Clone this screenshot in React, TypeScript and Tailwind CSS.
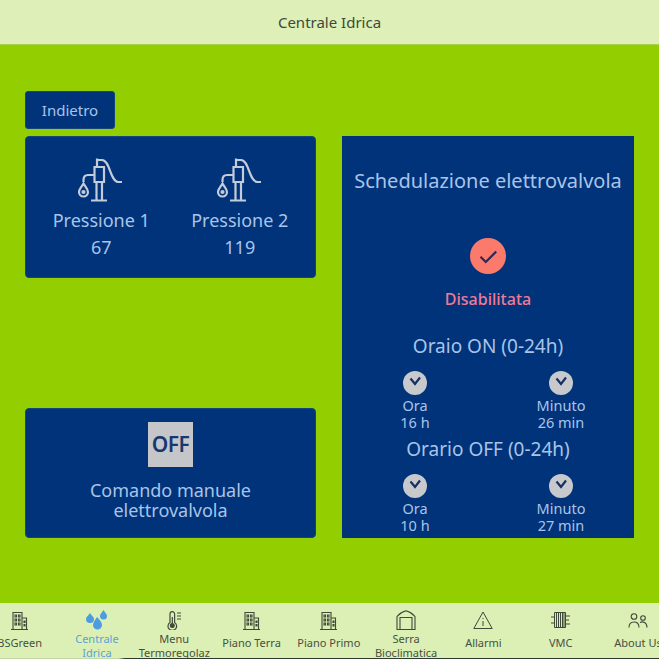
import React from "react";

const font = { fontFamily: '"Noto Sans", "Open Sans", sans-serif' };

const PumpIcon = () => (
  <svg width="46" height="46" viewBox="0 0 46 46" fill="none" stroke="#c3ccd8" strokeWidth="2.200">
    <path d="M16.500 10h9.500v15h-9.500z" />
    <path d="M18.500 25v18M24 25v18M13 43.500h16" />
    <path d="M19 10V1.500M19 3h5c8 0 8 21 16 22h4" />
    <path d="M16.500 18H10c-3 0-4.500 2-4.500 5v2" />
    <path d="M5.500 26.500C3.500 30 1 32 1 35a4.500 4.500 0 0 0 9 0c0-3-2.500-5-4.500-8.500z" />
    <circle cx="5.500" cy="35" r="1" fill="#c3ccd8" />
  </svg>
);

const CheckCircle = ({ size, bg, stroke, offset }: { size: number; bg: string; stroke: string; offset?: boolean }) => (
  <svg width={size} height={size} viewBox="0 0 24 24">
    <circle cx="12" cy="12" r="12" fill={bg} />
    <path d={offset ? "M7.500 7.500 12 13 17 6.500" : "M7 12.500 10.500 16 17.500 9"} fill="none" stroke={stroke} strokeWidth={offset ? 2.200 : 1.500} />
  </svg>
);

const TimeField = ({ label, value }: { label: string; value: string }) => (
  <div className="flex flex-col items-center">
    <CheckCircle size={24} bg="#c8c9cc" stroke="#17305f" offset />
    <div className="mt-[2px] text-[14.500px] leading-[17px]">{label}</div>
    <div className="text-[14.500px] leading-[17px]">{value}</div>
  </div>
);

const Building = () => (
  <svg width="17" height="19" viewBox="0 0 17 19" fill="none" stroke="#3f4a38" strokeWidth="1.100">
    <path d="M2 18V1.500h9V18M11 7h4.500v11M0 18.500h17" />
    <path d="M4 4h1.500v2H4zM7.500 4H9v2H7.500zM4 8h1.500v2H4zM7.500 8H9v2H7.500zM4 12h1.500v2H4zM7.500 12H9v2H7.500zM13 10h1v1.500h-1zM13 13.500h1V15h-1z" />
  </svg>
);

const Drops = () => (
  <svg width="21" height="20" viewBox="0 0 21 20" fill="#4d9be0">
    <path d="M4 3C2.500 5.500 0 7 0 9a4 4 0 0 0 8 0c0-2-2.500-3.500-4-6z" />
    <path d="M17.500 0c-1.500 2.500-3.500 4-3.500 6a3.500 3.500 0 0 0 7 0c0-2-2-3.500-3.500-6z" />
    <path d="M11 7C9.500 10 7 12 7 15a4.500 4.500 0 0 0 9 0c0-3-2.500-5-5-8z" />
  </svg>
);

const Thermometer = () => (
  <svg width="15" height="19" viewBox="0 0 15 19" fill="none" stroke="#3f4a38" strokeWidth="1.200">
    <path d="M3 11.500V3a2.300 2.300 0 0 1 4.600 0v8.500a4.300 4.300 0 1 1-4.600 0z" />
    <circle cx="5.300" cy="14.600" r="1.900" fill="#3f4a38" />
    <path d="M5.300 13V6M10 2h4M10 5h4M10 8h4" />
  </svg>
);

const Greenhouse = () => (
  <svg width="20" height="20" viewBox="0 0 20 20" fill="none" stroke="#3f4a38" strokeWidth="1.100">
    <path d="M1 19.500V6.500C3 4 6 2 10 .8c4 1.200 7 3.200 9 5.700v13zM4 19.500V7.500h12v12" />
  </svg>
);

const Warning = () => (
  <svg width="20" height="18" viewBox="0 0 20 18" fill="none" stroke="#3f4a38" strokeWidth="1">
    <path d="M10 1 .8 17.500h18.400zM10 7v1M10 10v5" />
  </svg>
);

const Vmc = () => (
  <svg width="20" height="16" viewBox="0 0 20 16" fill="none" stroke="#3f4a38" strokeWidth="1">
    <path d="M3.500.5h11v15h-11zM5.500.5v15M7.500.5v15M9.500.5v15M11.500.5v15M13 .5v15M0 5h3.500M0 11h3.500M14.500 4H19M14.500 8H18M14.500 12H19" />
  </svg>
);

const Users = () => (
  <svg width="20" height="15" viewBox="0 0 20 15" fill="none" stroke="#3f4a38" strokeWidth="1.100">
    <circle cx="6" cy="3.500" r="2.800" />
    <path d="M1 14.500c0-4 2-5.500 5-5.500s5 1.500 5 5.500" />
    <circle cx="15" cy="5" r="2.300" />
    <path d="M12 9.500c3-1.500 7 0 7 5" />
  </svg>
);

const navItems = [
  { icon: <Building />, lines: ["BSGreen"] },
  { icon: <Drops />, lines: ["Centrale", "Idrica"], active: true },
  { icon: <Thermometer />, lines: ["Menu", "Termoregolaz"] },
  { icon: <Building />, lines: ["Piano Terra"] },
  { icon: <Building />, lines: ["Piano Primo"] },
  { icon: <Greenhouse />, lines: ["Serra", "Bioclimatica"] },
  { icon: <Warning />, lines: ["Allarmi"] },
  { icon: <Vmc />, lines: ["VMC"] },
  { icon: <Users />, lines: ["About Us"] },
];

export default function App() {
  return (
    <div className="flex h-[659px] w-[659px] flex-col overflow-hidden bg-[#93cf00]" style={font}>
      <header className="flex h-[45px] shrink-0 items-center justify-center border-b border-[#a9cf4c] bg-[#deefb8] text-[15px] text-[#3d4a36]">
        Centrale Idrica
      </header>

      <main className="flex flex-1 gap-[26px] pl-[25px] pt-[46px] text-[#a9c4e8]">
        <div className="flex w-[291px] flex-col">
          <button className="h-[38px] w-[90px] rounded-[3px] border border-[#12457a] bg-[#00337a] text-[15px] text-[#a9c4e8]">Indietro</button>
          <section className="mt-[7px] flex h-[142px] rounded-[4px] border border-[#12457a] bg-[#00337a] pl-[6px] pr-[6px] pt-[20px]">
            {[
              ["Pressione 1", "67"],
              ["Pressione 2", "119"],
            ].map(([name, val]) => (
              <div key={name} className="flex flex-1 flex-col items-center">
                <PumpIcon />
                <div className="mt-[4px] text-[18px] leading-[27px]">{name}</div>
                <div className="text-[18px] leading-[27px]">{val}</div>
              </div>
            ))}
          </section>
          <section className="mt-[130px] flex h-[130px] flex-col items-center rounded-[4px] border border-[#12457a] bg-[#00337a] pt-[13px]">
            <div className="flex h-[45px] w-[45px] items-center justify-center bg-[#c4c6ca] text-[21px] font-semibold tracking-[-0.5px] text-[#17386f]">OFF</div>
            <div className="mt-[13px] text-center text-[18px] leading-[20px]">
              Comando manuale
              <br />
              elettrovalvola
            </div>
          </section>
        </div>

        <section className="mt-[45px] flex h-[402px] w-[292px] flex-col items-center bg-[#00337a] pt-[30px]">
          <h2 className="text-[20px] leading-[30px]">Schedulazione elettrovalvola</h2>
          <div className="mt-[42px]">
            <CheckCircle size={36} bg="#fc7a6c" stroke="#2a2a55" />
          </div>
          <div className="mt-[14px] text-[16px] font-medium leading-[22px] text-[#ef7a96]">Disabilitata</div>
          <div className="mt-[23px] text-[19px] leading-[26px]">Oraio ON (0-24h)</div>
          <div className="mt-[12px] grid w-full grid-cols-2">
            <TimeField label="Ora" value="16 h" />
            <TimeField label="Minuto" value="26 min" />
          </div>
          <div className="mt-[5px] text-[19px] leading-[26px]">Orario OFF (0-24h)</div>
          <div className="mt-[12px] grid w-full grid-cols-2">
            <TimeField label="Ora" value="10 h" />
            <TimeField label="Minuto" value="27 min" />
          </div>
        </section>
      </main>

      <nav className="-ml-[19px] flex h-[55px] w-[700px] shrink-0 overflow-hidden bg-[#dcefb5]">
        {navItems.map((item) => (
          <div
            key={item.lines.join(" ")}
            className={`flex w-[77.300px] shrink-0 flex-col items-center text-center text-[11px] ${item.active ? "text-[#5aa3d8]" : "text-[#46513f]"}`}
          >
            <div className="mt-[2px] flex h-[30px] shrink-0 items-center justify-center">{item.icon}</div>
            <div className={item.lines.length > 1 ? "-mt-[3px] shrink-0 leading-[14px]" : "shrink-0 leading-[15px]"}>
              {item.lines.map((l) => (
                <div key={l} className="whitespace-nowrap">{l}</div>
              ))}
            </div>
          </div>
        ))}
      </nav>
      <div className="h-[1px] shrink-0 bg-gradient-to-r from-[#c3d6a6] from-[18%] to-[#2f3a2c] to-[19%]" />
    </div>
  );
}
